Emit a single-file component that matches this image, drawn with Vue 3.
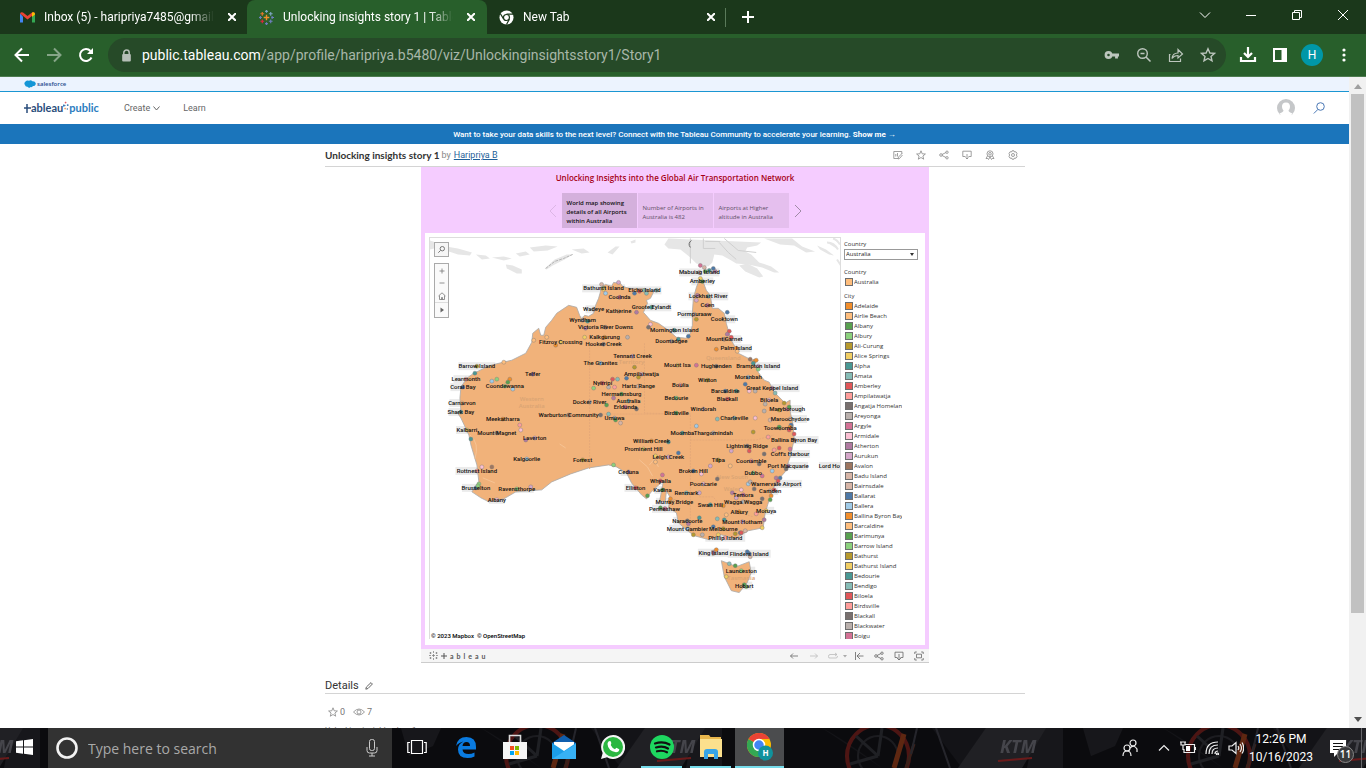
<script setup>
import { ref } from 'vue'

const search = ref('')
const country = ref('Australia')

const palette = ['#f28e2b', '#ffbe7d', '#59a14f', '#8cd17d', '#b6992d', '#f1ce63', '#499894', '#86bcb6', '#e15759', '#ff9d9a', '#79706e', '#bab0ac', '#d37295', '#fabfd2', '#b07aa1', '#d4a6c8', '#9d7660', '#d7b5a6', '#d7b5a6', '#4e79a7', '#a0cbe8']

const cities = ['Adelaide', 'Airlie Beach', 'Albany', 'Albury', 'Ali-Curung', 'Alice Springs', 'Alpha', 'Amata', 'Amberley', 'Ampilatwatja', 'Angatja Homeland', 'Areyonga', 'Argyle', 'Armidale', 'Atherton', 'Aurukun', 'Avalon', 'Badu Island', 'Bairnsdale', 'Ballarat', 'Ballera', 'Ballina Byron Bay', 'Barcaldine', 'Barimunya', 'Barrow Island', 'Bathurst', 'Bathurst Island', 'Bedourie', 'Bendigo', 'Biloela', 'Birdsville', 'Blackall', 'Blackwater', 'Boigu']
const cityColor = (i) => palette[i % 21]

const points = [
  'World map showing details of all Airports within Australia',
  'Number of Airports in Australia is 482',
  'Airports at Higher altitude in Australia'
]

const labels = [
  ['Bathurst Island', 604, 288], ['Elcho Island', 645, 290], ['Cooinda', 620, 297], ['Wadeye', 594, 309], ['Katherine', 619, 311],
  ['Groote Eylandt', 652, 307], ['Wyndham', 583, 320], ['Victoria River Downs', 606, 327], ['Kalkgurung', 605, 337], ['Fitzroy Crossing', 561, 342],
  ['Hooker Creek', 604, 344], ['Tennant Creek', 633, 356], ['The Granites', 601, 363], ['Barrow Island', 477, 366], ['Learmonth', 466, 379],
  ['Telfer', 533, 374], ['Coral Bay', 463, 387], ['Coondewanna', 505, 386], ['Nyirripi', 603, 383], ['Ampilatwatja', 642, 374],
  ['Harts Range', 639, 386], ['Hermannsburg', 622, 394], ['Australia', 629, 401], ['Erldunda', 626, 407], ['Docker River', 590, 402],
  ['Carnarvon', 462, 403], ['Shark Bay', 461, 412], ['Umuwa', 615, 418], ['Warburton Community', 569, 415], ['Meekatharra', 503, 419],
  ['Kalbarri', 467, 430], ['Mount Magnet', 497, 433], ['Laverton', 535, 438], ['Kalgoorlie', 527, 459], ['Forrest', 583, 460],
  ['Rottnest Island', 477, 471], ['Ceduna', 629, 472], ['Brusselton', 476, 488], ['Ravensthorpe', 517, 489], ['Elliston', 636, 488],
  ['Albany', 497, 500], ['Mabuiag Island', 700, 272], ['Amberley', 703, 281], ['Lockhart River', 709, 296], ['Coen', 708, 305],
  ['Pormpuraaw', 695, 314], ['Cooktown', 725, 319], ['Mornington Island', 675, 330], ['Doomadgee', 672, 341], ['Mount Garnet', 725, 339],
  ['Palm Island', 737, 348], ['Mount Isa', 678, 365], ['Hughenden', 717, 366], ['Brampton Island', 759, 366], ['Moranbah', 749, 377],
  ['Winton', 708, 380], ['Boulia', 681, 385], ['Great Keppel Island', 773, 388], ['Barcaldine', 726, 391], ['Bedourie', 677, 398],
  ['Blackall', 728, 399], ['Biloela', 770, 400], ['Windorah', 704, 409], ['Birdsville', 677, 413], ['Charleville', 735, 418],
  ['Maryborough', 788, 409], ['Maroochydore', 791, 419], ['Toowoomba', 781, 428], ['Moomba', 683, 433], ['Thargomindah', 714, 433],
  ['Ballina Byron Bay', 795, 440], ['William Creek', 652, 441], ['Prominent Hill', 644, 449], ['Lightning Ridge', 748, 446], ['Leigh Creek', 669, 457],
  ["Coff's Harbour", 791, 454], ['Tilpa', 719, 460], ['Coonamble', 752, 461], ['Port Macquarie', 789, 466], ['Broken Hill', 694, 471],
  ['Dubbo', 754, 473], ['Whyalla', 661, 481], ['Pooncarie', 704, 484], ['Warnervale Airport', 777, 484], ['Kadina', 663, 490],
  ['Renmark', 687, 493], ['Temora', 744, 495], ['Camden', 771, 491], ['Murray Bridge', 675, 502], ['Swan Hill', 711, 505],
  ['Wagga Wagga', 744, 502], ['Penneshaw', 665, 509], ['Albury', 740, 512], ['Moruya', 767, 511], ['Naracoorte', 688, 521],
  ['Mount Hotham', 743, 522], ['Mount Gambier', 688, 529], ['Melbourne', 724, 529], ['Phillip Island', 726, 538], ['King Island', 714, 553],
  ['Flinders Island', 750, 554], ['Launceston', 742, 571], ['Hobart', 745, 586], ['Lord Howe Island', 843, 466]
]
const plateWidth = (name) => name.length * 3 - 2

const dots = [
  [619, 282, 15], [606, 293, 20], [602, 284, 17], [637, 312, 14], [586, 328, 14], [588, 321, 6], [585, 337, 5], [628, 337, 11], [534, 340, 1], [547, 337, 1], [556, 345, 0],
  [504, 362, 1], [475, 373, 6], [497, 379, 3], [492, 381, 20], [510, 379, 0], [508, 382, 2], [513, 389, 20], [594, 388, 3], [613, 379, 8], [618, 379, 7], [609, 387, 11], [615, 387, 9],
  [614, 398, 14], [607, 405, 2], [637, 409, 10], [601, 415, 10], [609, 414, 7], [616, 420, 2], [621, 423, 17], [635, 367, 4], [627, 378, 19], [639, 377, 4], [520, 425, 9], [521, 430, 13],
  [526, 440, 14], [471, 439, 6], [482, 467, 13], [492, 467, 16], [479, 484, 3], [478, 486, 3], [614, 465, 3], [531, 487, 15], [648, 496, 2],
  [701, 265, 12], [705, 267, 17], [714, 268, 19], [710, 270, 6], [716, 271, 14], [706, 271, 2], [701, 278, 5], [698, 295, 14], [697, 300, 15], [697, 319, 4], [728, 312, 19],
  [651, 324, 13], [649, 327, 10], [647, 293, 7], [657, 290, 7], [640, 291, 8], [689, 336, 19], [679, 339, 6], [730, 331, 8], [728, 334, 14], [732, 337, 8], [717, 349, 0], [738, 351, 1],
  [697, 365, 12], [751, 359, 16], [755, 361, 0], [757, 360, 0], [754, 363, 6], [759, 369, 3], [746, 384, 19], [737, 391, 6], [750, 391, 13], [756, 391, 11], [776, 393, 7], [766, 404, 11],
  [785, 403, 4], [790, 407, 2], [765, 411, 11], [780, 410, 4], [718, 419, 7], [756, 418, 13], [771, 420, 17], [697, 426, 20], [792, 425, 19], [791, 427, 0], [790, 430, 8], [795, 434, 8],
  [754, 432, 4], [769, 437, 9], [780, 427, 2], [669, 442, 6], [679, 453, 19], [656, 456, 5], [656, 462, 1], [732, 451, 15], [750, 451, 8], [765, 454, 10], [775, 450, 9], [780, 448, 8], [791, 449, 12],
  [760, 464, 10], [711, 466, 15], [731, 466, 1], [702, 474, 13], [718, 479, 10], [763, 476, 12], [773, 471, 20], [787, 469, 10], [777, 478, 14], [781, 478, 19], [779, 481, 8], [749, 484, 20], [751, 482, 11],
  [755, 489, 10], [742, 490, 13], [733, 493, 14], [737, 498, 15], [700, 493, 15], [663, 475, 12], [671, 499, 0], [670, 502, 0], [775, 490, 8], [772, 496, 0], [771, 500, 2], [763, 499, 10], [724, 506, 0], [757, 514, 9],
  [765, 520, 14], [763, 528, 5], [727, 515, 1], [718, 519, 7], [725, 520, 6], [700, 518, 6], [689, 524, 14], [714, 527, 19], [694, 535, 4], [703, 535, 11], [736, 534, 4], [741, 533, 19], [742, 533, 8], [746, 531, 17],
  [719, 535, 5], [661, 508, 2], [666, 509, 12], [730, 564, 7], [736, 566, 2], [727, 577, 5], [717, 550, 0], [748, 552, 19], [751, 557, 17], [745, 585, 2], [747, 587, 3], [604, 289, 5], [635, 293, 19]
]
</script>

<template>
  <div class="desktop">
    <header class="tabs">
      <div class="tab">
        <svg class="fav" viewBox="0 0 15 12"><path fill="#4285f4" d="M0 2v9h3V5z" /><path fill="#34a853" d="M12 5v6h3V2z" /><path fill="#ea4335" d="M0 2Q1 0 3 1l4.500 3.500L12 1q2-1 3 1L7.500 8z" /><path fill="#fbbc04" d="M12 1q2-1 3 1v1l-3 2.500z" /></svg>
        <span class="tab-title">Inbox (5) - haripriya7485@gmail.com</span>
        <button class="close" aria-label="Close tab"><svg viewBox="0 0 8 8"><path d="M0 0l8 8M8 0L0 8" /></svg></button>
      </div>
      <div class="tab active">
        <svg class="fav" viewBox="0 0 16 16" fill="none"><path stroke="#f28e2b" stroke-width="1.500" d="M8 5v6M5 8h6" /><path stroke="#e8762c" stroke-width="1.300" d="M3.500 2v4M1.500 4h4" /><path stroke="#7fa8c4" stroke-width="1.200" d="M12.500 2v4M10.500 4h4M8 0v3M6.500 1.500h3" /><path stroke="#e0253c" stroke-width="1.300" d="M3.500 10v4M1.500 12h4" /><path stroke="#6f7fc0" stroke-width="1.200" d="M12.500 10v4M10.500 12h4M8 13v3M6.500 14.500h3M14 6.500v3M13 8h3M1.500 6.500v3M0 8h3" /></svg>
        <span class="tab-title">Unlocking insights story 1 | Tableau Public</span>
        <button class="close" aria-label="Close tab"><svg viewBox="0 0 8 8"><path d="M0 0l8 8M8 0L0 8" /></svg></button>
      </div>
      <div class="tab last">
        <svg class="fav" viewBox="0 0 16 16"><circle cx="8" cy="8" r="7.500" fill="#fff" /><circle cx="8" cy="8" r="3.200" fill="#fff" stroke="#1b381b" stroke-width="1.300" /><path d="M8 4.500h7M5 9.800L1.500 4M11 9.800L8 15.500" stroke="#1b381b" stroke-width="1.300" /></svg>
        <span class="tab-title">New Tab</span>
        <button class="close" aria-label="Close tab"><svg viewBox="0 0 8 8"><path d="M0 0l8 8M8 0L0 8" /></svg></button>
      </div>
      <button class="newtab" aria-label="New tab"><svg viewBox="0 0 12 12"><path d="M6 0v12M0 6h12" stroke="#fff" stroke-width="2" /></svg></button>
      <div class="win">
        <button aria-label="Search tabs"><svg width="12" height="12" viewBox="0 0 12 12"><path d="M1 3.500l5 5 5-5" /></svg></button>
        <button aria-label="Minimize"><svg width="12" height="12" viewBox="0 0 12 12"><path d="M1 6.500h10" /></svg></button>
        <button aria-label="Restore"><svg width="12" height="12" viewBox="0 0 12 12"><path d="M1.500 3.500h7v7h-7zM3.500 3.500v-2h7v7h-2" /></svg></button>
        <button aria-label="Close"><svg width="12" height="12" viewBox="0 0 12 12"><path d="M1 1l10 10M11 1L1 11" /></svg></button>
      </div>
    </header>

    <div class="toolbar">
      <button class="tool" aria-label="Back"><svg width="16" height="16" viewBox="0 0 16 16"><path d="M15 8H2M8 1.500L1.500 8 8 14.500" stroke="#fff" stroke-width="2" /></svg></button>
      <button class="tool" aria-label="Forward"><svg width="16" height="16" viewBox="0 0 16 16"><path d="M1 8h13M8 1.500L14.500 8 8 14.500" stroke="#86a588" stroke-width="2" /></svg></button>
      <button class="tool" aria-label="Reload"><svg width="16" height="16" viewBox="0 0 16 16"><path d="M13.500 10.500A6 6 0 1 1 12.500 4" stroke="#fff" stroke-width="2" /><path d="M15 1v6H9z" fill="#fff" /></svg></button>
      <div class="omnibox">
        <svg class="lock" viewBox="0 0 10 12"><path d="M2.500 5V3.500a2.500 2.500 0 0 1 5 0V5" stroke="#b6bfb7" stroke-width="1.400" /><rect x="1" y="4.500" width="8" height="7" rx="1" fill="#b6bfb7" /></svg>
        <span class="url"><b>public.tableau.com</b>/app/profile/haripriya.b5480/viz/Unlockinginsightsstory1/Story1</span>
        <button class="tool" aria-label="Passwords"><svg width="16" height="16" viewBox="0 0 16 16"><circle cx="4.500" cy="8" r="2.600" stroke="#bcc6bd" stroke-width="2.600" /><path d="M7 8h8M12.500 8v3.500" stroke="#bcc6bd" stroke-width="2.800" /></svg></button>
        <button class="tool" aria-label="Zoom"><svg width="16" height="16" viewBox="0 0 16 16"><circle cx="6.500" cy="6.500" r="4.800" stroke="#bcc6bd" stroke-width="1.400" /><path d="M10 10l4.500 4.500M4.500 6.500h4" stroke="#bcc6bd" stroke-width="1.500" /></svg></button>
        <button class="tool" aria-label="Share"><svg width="16" height="16" viewBox="0 0 16 16"><path d="M2.500 7.500h-1v7h11v-3M4 11.500q.5-5.500 6-5.500V2.500L14.500 7 10 11V8.500q-4 0-6 3z" stroke="#bcc6bd" stroke-width="1.200" /></svg></button>
        <button class="tool" aria-label="Bookmark"><svg width="16" height="16" viewBox="0 0 16 16"><path d="M8 1.800l1.900 4.200 4.500.4-3.400 3 1 4.500L8 11.500l-4 2.400 1-4.500-3.400-3 4.500-.4z" stroke="#bcc6bd" stroke-width="1.400" /></svg></button>
      </div>
      <button class="tool first" aria-label="Downloads"><svg width="18" height="18" viewBox="0 0 18 18"><path d="M9 1v9M5 7l4 4 4-4M2 11v4h14v-4" stroke="#fff" stroke-width="2.200" /></svg></button>
      <button class="tool" aria-label="Side panel"><svg width="14" height="14" viewBox="0 0 14 14"><path d="M1 1h12v12H1z" stroke="#fff" stroke-width="2" /><path d="M8.500 0H14v14H8.500z" fill="#fff" /></svg></button>
      <button class="tool" aria-label="Profile"><span class="me">H</span></button>
      <button class="tool" aria-label="Menu"><svg width="4" height="16" viewBox="0 0 4 16"><g fill="#fff"><circle cx="2" cy="3" r="1.600" /><circle cx="2" cy="8" r="1.600" /><circle cx="2" cy="13" r="1.600" /></g></svg></button>
    </div>

    <div class="view">
      <main class="page">
        <div class="sf">
          <svg width="12" height="8" viewBox="0 0 12 8"><path fill="#1596d6" d="M1 5Q-.5 3 1.500 1.500 3-.2 5 .8 7-.5 8.300 1.200 11 .8 11.800 3.200 11.800 6 9 6 8.200 7.500 6.500 7 5 8.800 3.500 6.800 1.200 7 1 5z" /></svg>
          <span>salesforce</span>
        </div>
        <nav class="nav">
          <a class="brand" href="#" aria-label="tableau public"><svg width="7" height="9" viewBox="0 0 7 9"><path d="M3 0v9M0 4h7" stroke="#2a4d7c" stroke-width="1.500" /></svg><span>ableau</span><svg class="spark" width="6" height="10" viewBox="0 0 7 10"><path stroke="#e8585e" d="M3 0v2M2 1h2" /><path stroke="#2a6dac" d="M1 3v3M0 4.500h3M5.500 3v2M4.500 4h2M5 7.500v2" /><path stroke="#f29b5b" d="M2.500 7v2M1.500 8h2" /></svg><span class="pub">public</span></a>
          <button class="link">Create <svg width="7" height="5" viewBox="0 0 7 5"><path d="M.5.5l3 3.500 3-3.500" stroke="#666" /></svg></button>
          <a class="link learn" href="#">Learn</a>
          <svg class="user" width="18" height="18" viewBox="0 0 18 18"><circle cx="9" cy="9" r="9" fill="#c5c7c9" /><path fill="#fff" d="M9 3.500c3 0 4.200 2 4 4.500q-.3 2.600-1.500 3.500 0 1.500 4 3L13 18H5l-2.500-3.500q4-1.500 4-3Q5.300 10.600 5 8c-.2-2.500 1-4.500 4-4.500z" /></svg>
          <button class="find" aria-label="Search"><svg width="12" height="12" viewBox="0 0 12 12"><circle cx="7.500" cy="4.500" r="3.800" stroke="#4a78b5" /><path d="M4.800 7.500L.8 11.500" stroke="#4a78b5" /></svg></button>
        </nav>
        <div class="banner">Want to take your data skills to the next level? Connect with the Tableau Community to accelerate your learning.&nbsp;<a href="#">Show me →</a></div>

        <div class="wrap">
          <div class="head">
            <h1>Unlocking insights story 1</h1><span class="by">by</span><a href="#">Haripriya B</a>
            <div class="acts">
              <button aria-label="Edit"><svg viewBox="0 0 10 10"><path d="M5 8.500H.8v-7h8V4M2.800 6.500V4M4.500 6.500V3M5 9l.5-2L9 3.500M9.500 5L6.500 8.500 5 9" /></svg></button>
              <button aria-label="Favorite"><svg viewBox="0 0 10 10"><path d="M5 .8l1.200 3 3.200.2-2.500 2 .8 3.200L5 7.500 2.300 9.200l.8-3.200L.6 4l3.200-.2z" /></svg></button>
              <button aria-label="Share"><svg viewBox="0 0 10 10"><circle cx="2" cy="5" r="1.300" /><circle cx="8" cy="2.200" r="1.200" /><circle cx="8" cy="7.800" r="1.200" /><path d="M3 4.500l4-2M3 5.500l4 2" /></svg></button>
              <button aria-label="Download"><svg viewBox="0 0 10 10"><path d="M3.500 6.500H.8V1.200h8.400v5.300H6.500M5 4v5M3.500 7.500L5 9l1.500-1.500" /></svg></button>
              <button aria-label="Nominate"><svg viewBox="0 0 10 10"><circle cx="5" cy="3.800" r="3" /><circle cx="5" cy="3.800" r="1.300" /><path d="M2.500 6L1 8.500l1.800 0 .7 1L5 7l1.500 2.500.7-1 1.800 0L7.500 6" /></svg></button>
              <button aria-label="Settings"><svg viewBox="0 0 10 10"><circle cx="5" cy="5" r="1.500" /><path d="M4 .8h2l.5 1.200 1.500-.2 1 1.700-.6 1.500.6 1.500-1 1.700-1.500-.2L6 9.200H4L3.500 8 2 8.200 1 6.500 1.600 5 1 3.500l1-1.700 1.500.2z" /></svg></button>
            </div>
          </div>

          <section class="viz">
            <div class="story">
              <h2>Unlocking Insights into the Global Air Transportation Network</h2>
              <div class="steps">
                <button class="arrow dim" aria-label="Previous"><svg viewBox="0 0 8 14"><path d="M7 1L1 7l6 6" /></svg></button>
                <button v-for="(p, i) in points" :key="p" class="step" :class="{ on: i === 0 }">{{ p }}</button>
                <button class="arrow" aria-label="Next"><svg viewBox="0 0 8 14"><path d="M1 1l6 6-6 6" /></svg></button>
              </div>
              <div class="dash">
                <div class="map">
                  <svg class="canvas" viewBox="430 238 411 401">
                    <g fill="#e6e6e6">
                      <path d="M669 238l-4 6 4 4 12 1 10 8 6 6 12 3 4-4 2-8 8 1 9 5 5 3 12 1 14 3 12 5 5 0-8-6-12-4-8-8-6-3 2-4 10-2 4-3z" />
                      <path d="M430 240l6 2-2 6-4 1zM446 246l12 2 14 4-2 3-12-1-12-4zM476 254l10 1 4 3-8 1zM492 257l12-1 8 2-8 2zM516 253l10-2 4 3-10 2zM506 264l7 1 9 4 0 4-5 0-10-5zM545 268l10-9 12-5 6 0-8 5-12 6-6 4zM530 247l16-2 12 1-10 4-14 1zM572 249l12-1 6 4-8 1zM608 252l8-6 4 0-7 8zM631 241l5-2 0 3-4 1zM740 265l8-2 10 5 6 8-4 1-14-6zM765 238l28 0 10 8 13 5-9 1-12-7-14-1zM818 245l9 4 8 6-5-1-9-5z" />
                      <path d="M828 242q7 0 11 7M834 238q4 1 7 6M838 259l4 6" stroke="#e6e6e6" stroke-width="2" />
                    </g>
                    <path d="M691 238v25M704 238v10h12M706 241h15M720 242l9 10 8 7M725 238l14 12 18 2" stroke="#cfcfcf" />
                    <path d="M692 240q-4 3-1 7" stroke="#666" />
                    <path d="M546 268l9-7 9-3 9-4" stroke="#b5b5b5" stroke-dasharray="3 1" />
                    <g fill="#ebebeb">
                      <rect v-for="l in labels" :key="l[0]" :x="l[1] - plateWidth(l[0]) / 2" :y="l[2] - 4" :width="plateWidth(l[0])" height="8" />
                    </g>
                    <path class="land" d="M580 315l2 4 3-4 4 1 5-3 2-8 3-7 2-7 0-4 5-3 6 2 2-4 7 1 2 3 7 2 5 0 8 0 6 1 5 3-3 6-4 2 1 3-4 9 7 8 8 3 10 7 8 7 10 1 4-5 2-8 0-13 1-14 3-11 4-10 3 5 3 8 4 5 2 13 6 0 6 5 2 10 2 7 3 10 4 7 3 6 10 5 6 5 4 9 6 8 5 2 5 10 11 11 5-3 0 11 3 14 1 15-4 17-5 15-9 10-6 15-5 16-2 15-15 3-13 8-14-4-12 5-15-4-8-6-8-7-2-10-8-5 2-10-4-7-1 10-6 1 2-10 2-11-7 6-6 6-4 6-5-4-10-12-5-10-10-6-8-2-20 3-18 6-19 8-10 8-26 2-12 7-15 3-8-4-9-6 7-10-2-17-6-20-2-10-8-17-4-6 4 0-1-14 1-11 6-9 7-5 17-8 21-5 14-7 6-11 1-9 6-5 2 7 3 0 2-8 6-7 5-7 12-8 8 2z" />
                    <path class="land" d="M722 561l8 3 7 3 13-5 2 11-4 10-8 10-8-2-7-14z" />
                    <path class="land" d="M712 551l4-1 0 5-3 1zM748 551l4 2 0 5-2-2z" />
                    <path d="M590 344v125M645 343v70l46 1v114M590 414h101M691 440h66l18-5M700 497l14 0 6 8 12-1 8 9 14 4" stroke="#e5a978" stroke-dasharray="2 1" />
                    <path d="M470 435q10 8 5 24M483 478l12 5M640 460l8 7 5 9M560 444l6 4M650 465l5-6 4 8" stroke="#f6c394" />
                    <g class="state"><text x="532" y="401">Western</text><text x="532" y="408">Australia</text><text x="724" y="360">Queensland</text><text x="632" y="364">Territory</text><text x="733" y="479">New South</text><text x="733" y="491">Wales</text><text x="742" y="580">Tasmania</text></g>
                    <g class="dots">
                      <circle v-for="(l, i) in labels" :key="l[0]" :cx="l[1]" :cy="l[2]" r="2" :fill="palette[(i * 5 + 2) % 21]" />
                      <circle v-for="(d, i) in dots" :key="i" :cx="d[0]" :cy="d[1]" r="2" :fill="palette[d[2]]" />
                    </g>
                    <g class="names"><text v-for="l in labels" :key="l[0]" :x="l[1]" :y="l[2] + 2">{{ l[0] }}</text></g>
                  </svg>
                  <button class="mapfind" aria-label="Search map"><svg width="7" height="7" viewBox="0 0 7 7"><circle cx="4.300" cy="2.700" r="2.200" stroke="#777" /><path d="M2.600 4.400L.3 6.700" stroke="#777" /></svg></button>
                  <div class="zoomer">
                    <button aria-label="Zoom in"><svg viewBox="0 0 8 8"><path d="M4 1.500v5M1.500 4h5" /></svg></button>
                    <button aria-label="Zoom out"><svg viewBox="0 0 8 8"><path d="M1.500 4h5" /></svg></button>
                    <button aria-label="Reset"><svg viewBox="0 0 8 8"><path d="M.5 4L4 .8 7.500 4M1.500 3.500v4h5v-4M3.500 7.500v-2h1v2" /></svg></button>
                    <button aria-label="Map tools"><svg viewBox="0 0 8 8"><path d="M2.500 1.500v5L6 4z" fill="#666" stroke="none" /></svg></button>
                  </div>
                  <span class="credit">© 2023 Mapbox &nbsp;© OpenStreetMap</span>
                </div>
                <aside class="side">
                  <label for="country">Country</label>
                  <div class="pick">
                    <select id="country" v-model="country"><option>Australia</option></select>
                    <svg viewBox="0 0 4 3"><path d="M0 0h4L2 3z" fill="#333" /></svg>
                  </div>
                  <h3 class="gap-l">Country</h3>
                  <ul><li><i class="tan"></i><span>Australia</span></li></ul>
                  <h3 class="gap-s">City</h3>
                  <ul class="cities"><li v-for="(c, i) in cities" :key="c"><i :style="{ background: cityColor(i) }"></i><span>{{ c }}</span></li></ul>
                </aside>
              </div>
            </div>
            <footer class="vizbar">
              <svg class="mark" viewBox="0 0 9 9"><path d="M4.500 3v3M3 4.500h3M4.500 0v2M4.500 7v2M0 4.500h2M7 4.500h2M1.500 1v2M.5 2h2M7.500 1v2M6.500 2h2M1.500 6v2M.5 7h2M7.500 6v2M6.500 7h2" /></svg>
              <span class="word"><svg viewBox="0 0 6 6"><path d="M3 0v6M0 3h6" /></svg><span v-for="(ch, i) in 'ableau'" :key="i">{{ ch }}</span></span>
              <button class="bt" aria-label="Undo"><svg viewBox="0 0 10 10"><path d="M9 5H1.500M4 2.500L1.500 5 4 7.500" /></svg></button>
              <button class="bt faint" aria-label="Redo"><svg viewBox="0 0 10 10"><path d="M1 5h7.500M6 2.500L8.500 5 6 7.500" /></svg></button>
              <button class="bt faint mid" aria-label="Replay"><svg viewBox="0 0 10 10"><path d="M7 2l2 1.500L7 5M9 3.500H2q-1.500 0-1.500 2T2 7h6q1.500 0 1.500-2" /></svg></button>
              <button class="bt mini" aria-label="Replay speed"><svg viewBox="0 0 10 10"><path d="M3 4h4L5 6.500z" fill="#aaa" stroke="none" /></svg></button>
              <button class="bt" aria-label="Revert"><svg viewBox="0 0 10 10"><path d="M1.500 1v8M9.500 5H3M6 2L3 5l3 3" /></svg></button>
              <button class="bt" aria-label="Share"><svg viewBox="0 0 10 10"><circle cx="2" cy="5" r="1.300" /><circle cx="8" cy="2.200" r="1.200" /><circle cx="8" cy="7.800" r="1.200" /><path d="M3 4.500l4-2M3 5.500l4 2" /></svg></button>
              <button class="bt" aria-label="Download"><svg viewBox="0 0 10 10"><path d="M3.500 6.500H1V1.200h8v5.300H6.500M5 3v6M3 7l2 2 2-2" /></svg></button>
              <button class="bt" aria-label="Full screen"><svg viewBox="0 0 10 10"><path d="M.8 3V1h2M7.200 1h2v2M9.200 7v2h-2M2.800 9h-2V7M2.500 3.200h5v3.600h-5z" /></svg></button>
            </footer>
          </section>

          <div class="details"><h2>Details</h2><svg width="8" height="8" viewBox="0 0 8 8"><path d="M.8 7.200l.6-2.200L6 .6l1.400 1.400L3 6.500z" stroke="#666" /></svg></div>
          <div class="stats">
            <svg class="s-star" viewBox="0 0 10 10"><path d="M5 .8l1.200 3 3.200.2-2.500 2 .8 3.200L5 7.500 2.300 9.200l.8-3.200L.6 4l3.200-.2z" /></svg><span>0</span>
            <svg class="s-eye" viewBox="0 0 12 8"><path d="M.5 4Q6-2 11.500 4 6 10 .5 4z" /><circle cx="6" cy="4" r="2" /></svg><span>7</span>
          </div>
          <p class="desc">Unlocking insights story 1</p>
        </div>
      </main>
      <div class="scroll">
        <svg viewBox="0 0 8 5"><path d="M4 0l4 5H0z" fill="#a0a0a0" /></svg>
        <div class="track"><div class="thumb"></div></div>
        <svg viewBox="0 0 8 5"><path d="M0 0h8L4 5z" fill="#505050" /></svg>
      </div>
    </div>

    <footer class="task">
      <svg class="wall" aria-hidden="true">
        <defs>
          <pattern id="bike" x="40" width="341" height="40" patternUnits="userSpaceOnUse">
            <rect width="341" height="40" fill="#0b0b0e" />
            <path d="M313 0h28v40h-36zM20 0h40l-8 18-24 10z" fill="#17171b" />
            <path d="M160 40Q120 10 100 0M210 0l60 0 20 12v28h-50z" fill="#131317" />
            <g fill="none"><circle cx="156" cy="28" r="31" stroke="#4d1513" stroke-width="4" /><circle cx="156" cy="28" r="20" stroke="#1c1c20" stroke-width="2" /><path d="M156 28l-22-20M156 28l-28 8M156 28l4-28" stroke="#1f2024" stroke-width="3" /><path d="M172 40l10-34" stroke="#5e2711" stroke-width="5" /><path d="M184 40l8-24" stroke="#3a2019" stroke-width="3" /><path d="M214 0l14 40M195 0l-6 26" stroke="#25252b" stroke-width="2" /></g>
            <path d="M236 40l28-40h60l-24 40z" fill="#202024" />
            <text x="278" y="25" fill="#45454b" font-size="18" font-weight="700" font-style="italic">KTM</text>
            <path d="M276 33l34-3" stroke="#6a1a1a" stroke-width="2" />
          </pattern>
        </defs>
        <rect width="100%" height="100%" fill="url(#bike)" />
      </svg>
      <button class="app start" aria-label="Start"><svg width="17" height="16" viewBox="0 0 17 16"><path fill="#fff" stroke="none" d="M0 2.300L7 1.300v6.200H0zM8 1.200L17 0v7.500H8zM0 8.500h7v6.200l-7-1zM8 8.500h9V16l-9-1.200z" /></svg></button>
      <div class="search">
        <svg width="22" height="22" viewBox="0 0 22 22"><circle cx="11" cy="11" r="9.500" stroke="#f2f2f2" stroke-width="2.600" /></svg>
        <input v-model="search" aria-label="Type here to search" placeholder="Type here to search" />
        <svg width="12" height="18" viewBox="0 0 12 18"><rect x="3.500" y=".5" width="5" height="11" rx="2" stroke="#ccc" /><path d="M1 8v3.500q0 2.500 2.500 2.500h5q2.500 0 2.500-2.500V8M6 14v3M3 17h6" stroke="#ccc" /></svg>
      </div>
      <button class="app" aria-label="Task view"><svg width="20" height="16" viewBox="0 0 20 16"><path d="M4.500 1.500h11v13h-11zM3 3.500H.8v10H3M17 3.500h2.200v10H17" stroke="#fff" stroke-width="1.200" /></svg></button>
      <button class="app" aria-label="Edge"><svg width="22" height="22" viewBox="0 0 22 22"><path fill="#0a7be0" d="M1 10Q2.500 1 11.500 1 21 1 21 11v2.500H7.500q.5 4.500 6 4.500 3 0 6-1.500v4q-3 1.500-7 1.500Q3 22 3 13.500 3 8 8.500 5.500 3.500 6.500 1 10zm6.500 0H15q0-4-3.500-4T7.500 10z" /></svg></button>
      <button class="app" aria-label="Store"><svg width="24" height="26" viewBox="0 0 24 26"><path d="M6.500 9V1.500h11V9" stroke="#ddd" stroke-width="1.600" /><path fill="#f5f5f5" d="M0 8h24v17H0z" /><path fill="#f25022" d="M7 12h4v4H7z" /><path fill="#7fba00" d="M12 12h4v4h-4z" /><path fill="#00a4ef" d="M7 17h4v4H7z" /><path fill="#ffb900" d="M12 17h4v4h-4z" /></svg></button>
      <button class="app" aria-label="Mail"><svg width="24" height="24" viewBox="0 0 24 24"><path fill="#0f5fae" d="M0 8l12-8 12 8v8H0z" /><path fill="#fff" d="M2 7h20v8l-10 4-10-4z" /><path fill="#1b9de8" d="M0 8l12 8 12-8v16H0z" /><path fill="#37b1f5" d="M0 24L24 9v15z" /></svg></button>
      <button class="app" aria-label="WhatsApp"><svg width="24" height="24" viewBox="0 0 24 24"><path fill="#f5f5f5" d="M12 0a12 12 0 1 1-6 22.300L0 24l1.700-6A12 12 0 0 1 12 0z" /><circle cx="12" cy="12" r="10" fill="#2bb741" /><path fill="#fff" d="M7.500 6.500q2-1.500 2.600.8.6 1.700-.4 2.700 1.300 3 4.300 4.200l1.300-1.400 3 1.500q-.2 3-3.300 3Q7 16 6.500 9q0-1.500 1-2.500z" /></svg></button>
      <button class="app run" aria-label="Spotify"><svg width="24" height="24" viewBox="0 0 24 24"><circle cx="12" cy="12" r="12" fill="#1ed760" /><path d="M5 8.500q8-2.500 14.500 1M6 12.500q7-2 12 1M7 16.300q5.500-1.500 10 1" stroke="#111" stroke-width="2.200" stroke-linecap="round" /></svg></button>
      <button class="app run" aria-label="File Explorer"><svg width="22" height="24" viewBox="0 0 22 24"><path fill="#e8b64c" d="M0 0h9l1.500 2H21v4H0z" /><path fill="#fbe08d" d="M0 4h22v18H0z" /><path fill="#37a5e8" d="M4 24v-7q0-3 3-3h8q3 0 3 3v7h-4v-5H8v5z" /></svg></button>
      <button class="app run hot" aria-label="Chrome"><svg width="26" height="28" viewBox="0 0 26 28"><circle cx="12" cy="12" r="12" fill="#fbbc04" /><path fill="#34a853" d="M12 12L1.600 6A12 12 0 0 0 12 24z" /><path fill="#ea4335" d="M12 12V6h10.400A12 12 0 0 0 1.600 6z" /><circle cx="12" cy="12" r="5.500" fill="#4285f4" stroke="#fff" stroke-width="1.500" /><circle cx="18.500" cy="20" r="7.500" fill="#10929c" /><text x="18.500" y="23" text-anchor="middle" font-size="8" font-weight="700" fill="#fff">H</text></svg></button>
      <div class="tray">
        <button class="t-people" aria-label="People"><svg width="16" height="18" viewBox="0 0 16 18"><circle cx="11" cy="4" r="3" /><path d="M8 9q4-4 7 1v3" /><circle cx="5" cy="9" r="3" /><path d="M1 17q0-5 4-5t4 5" /></svg></button>
        <button aria-label="Show hidden icons"><svg width="12" height="8" viewBox="0 0 12 8"><path d="M1 6.500L6 1.500l5 5" /></svg></button>
        <button aria-label="Battery"><svg width="16" height="14" viewBox="0 0 16 14"><path d="M5 3.500h9.500v8H4V8M15.500 6v3M1 1v3h4V1M3 4v5M0 1h6" /><path fill="#fff" stroke="none" d="M6 5h4v5H6z" /></svg></button>
        <button aria-label="Network"><svg width="14" height="14" viewBox="0 0 14 14"><path d="M1 13Q1 1 13 1M4 13q0-9 9-9M7 13q0-6 6-6M10 13q0-3 3-3" stroke-width="1.200" /><circle cx="12.500" cy="13" r="1" /></svg></button>
        <button aria-label="Volume"><svg width="16" height="14" viewBox="0 0 16 14"><path d="M1 5h3l4-3.500v11L4 9H1zM10 5q1.500 2 0 4M12 3q3 4 0 8M14 1.500q3.500 5.500 0 11" /></svg></button>
        <div class="clock"><span>12:26 PM</span><span>10/16/2023</span></div>
        <button class="note" aria-label="Notifications"><svg width="18" height="18" viewBox="0 0 18 18"><path fill="#fff" stroke="none" d="M1 1h16v13h-8l-4 4v-4H1z" /><path stroke="#111" d="M4 4.500h10M4 7.500h10M4 10.500h6" /></svg><span class="count">11</span></button>
        <div class="edge"></div>
      </div>
    </footer>
  </div>
</template>

<style>
html, body { margin: 0; overflow: hidden; }
</style>
<style scoped>
* { box-sizing: border-box; }
button { background: none; border: 0; padding: 0; margin: 0; font: inherit; color: inherit; display: flex; align-items: center; justify-content: center; }
h1, h2, h3, p, ul { margin: 0; padding: 0; list-style: none; }
svg { display: block; fill: none; flex: none; }
.desktop { height: 100vh; display: flex; flex-direction: column; font-family: "Open Sans", "Noto Sans", sans-serif; background: #fff; overflow: hidden; }

.tabs { height: 34px; flex: none; background: #1b381b; display: flex; align-items: stretch; color: #fff; }
.tab { width: 240px; flex: 0 1 240px; display: flex; align-items: center; gap: 9px; padding: 0 12px; font: 12px Roboto, sans-serif; }
.tab:first-child { width: 247px; flex-basis: 247px; padding: 0 11px 0 20px; }
.tab.active { background: #285f2b; border-radius: 8px 8px 0 0; }
.fav { width: 15px; height: 15px; }
.tab-title { flex: 1; min-width: 0; overflow: hidden; white-space: nowrap; -webkit-mask-image: linear-gradient(90deg, #000 86%, transparent); mask-image: linear-gradient(90deg, #000 86%, transparent); }
.close { width: 8px; height: 8px; margin-left: 5px; }
.close svg { width: 8px; height: 8px; stroke: #fff; stroke-width: 2; }
.newtab { width: 42px; }
.newtab svg { width: 12px; height: 12px; }
.tab.last { position: relative; }
.tab.last::after { content: ""; position: absolute; right: 1px; top: 8px; height: 19px; width: 1px; background: #5a7a5a; }
.win { margin-left: auto; display: flex; padding-bottom: 5px; }
.win button { width: 46px; }
.win svg { stroke: #fff; }

.toolbar { height: 43px; flex: none; background: #285f2b; border-bottom: 1px solid #4d7c50; display: flex; align-items: center; padding: 0 6px; }
.tool { width: 32px; height: 34px; flex: none; }
.tool.first { margin-left: 6px; }
.omnibox { flex: 1; min-width: 0; height: 34px; margin-left: 6px; border-radius: 17px; background: #264a28; display: flex; align-items: center; padding: 0 2px 0 13px; }
.lock { width: 11px; height: 13px; }
.url { flex: 1; min-width: 0; margin-left: 10px; font: 14px/20px Roboto, sans-serif; color: #a8b7a9; white-space: nowrap; overflow: hidden; }
.url b { font-weight: 400; color: #fff; }
.me { width: 22px; height: 22px; border-radius: 11px; background: #0097a7; color: #fff; font: 12px/22px Roboto, sans-serif; text-align: center; }

.view { flex: 1; min-height: 0; display: flex; }
.page { flex: 1; min-width: 0; overflow: hidden; background: #fff; font-family: Roboto, sans-serif; }
.scroll { width: 17px; background: #f1f1f1; display: flex; flex-direction: column; align-items: center; padding: 7px 0 6px; gap: 5px; }
.scroll svg { width: 8px; height: 5px; }
.track { flex: 1; width: 13px; }
.thumb { height: 84%; background: #c1c1c1; }

.sf { height: 15px; background: #ecf3fe; border-bottom: 1px solid #1b96d2; display: flex; align-items: center; gap: 1px; padding: 0 24px; }
.sf span { font: 600 6px/10px "Open Sans", sans-serif; color: #1e4b8f; }
.nav { height: 32px; display: flex; align-items: center; padding: 0 24px; font-size: 9px; color: #666; }
.brand { display: flex; align-items: center; text-decoration: none; color: #2a4d7c; font: 700 11px/16px Lato, sans-serif; width: 75px; }
.brand .pub { color: #2a7cc0; }
.spark { margin-bottom: 5px; }
.link { margin-left: 25px; color: #666; text-decoration: none; gap: 3px; }
.learn { margin-left: 23px; }
.user { margin-left: auto; }
.find { margin: 0 0 0 18px; width: 12px; }
.banner { height: 20px; background: #1b75bb; color: #fff; font: 500 8px Roboto, sans-serif; display: flex; align-items: center; justify-content: center; white-space: nowrap; }
.banner a { color: #fff; font-weight: 700; text-decoration: none; }

.wrap { max-width: 701px; margin: 0 auto; padding-left: 1px; }
.head { height: 23px; display: flex; align-items: center; border-bottom: 1px solid #d4d4d4; font-size: 9px; }
.head h1 { font: 700 10px Lato, sans-serif; color: #333; }
.by { margin: 0 3px 0 2px; color: #888; }
.head a { color: #1f5f99; }
.acts { margin-left: auto; display: flex; gap: 13px; padding-right: 7px; }
.acts button { width: 10px; }
.acts svg, .bt svg, .mark, .s-star, .s-eye { width: 10px; height: 10px; stroke: #888; stroke-width: .8; }

.viz { max-width: 508px; margin: 0 auto; border-bottom: 1px solid #ccc; }
.story { background: #f5ccff; padding: 4px; font-family: "Open Sans", sans-serif; }
.story h2 { text-align: center; color: #a50016; font-size: 8px; line-height: 13px; font-weight: 600; }
.steps { display: flex; justify-content: center; gap: 1px; padding: 9px 0 5px; }
.step { width: 75px; height: 35px; overflow: hidden; padding: 6px 5px 2px; background: #e5bfee; color: #5f5065; font-size: 6px; line-height: 9px; text-align: left; display: block; }
.step.on { background: #d4b0dc; color: #111; font-weight: 600; }
.arrow { width: 16px; }
.arrow svg { width: 8px; height: 14px; stroke: #a08ba6; }
.arrow.dim svg { stroke: #dcb6e5; }
.dash { background: #fff; display: flex; padding: 4px 4px 6px; height: 412px; }
.map { flex: 1; min-width: 0; position: relative; border: 1px solid #ddd; border-bottom: 0; overflow: hidden; }
.canvas { width: 100%; height: 100%; }
.land { fill: #f1b27a; stroke: #aaa; stroke-width: .8; }
.state { font: 600 6px "Open Sans", sans-serif; fill: #d9a474; text-anchor: middle; }
.names { font: 500 6px Roboto, sans-serif; fill: #111; text-anchor: middle; }
.dots { stroke: #777; stroke-width: .4; }
.mapfind { position: absolute; left: 4px; top: 4px; width: 15px; height: 15px; border: 1px solid #aaa; background: #f6f6f6; }
.zoomer { position: absolute; left: 4px; top: 25px; width: 15px; border: 1px solid #aaa; background: #fafafa; padding: 1px 0 0; }
.zoomer button { width: 13px; height: 12px; }
.zoomer button:nth-child(3) { height: 13px; }
.zoomer button:last-child { border-top: 1px solid #ddd; height: 15px; }
.zoomer svg { width: 8px; height: 8px; stroke: #777; stroke-width: .8; }
.credit { position: absolute; left: 1px; bottom: 0; font: 500 6px/7px Roboto, sans-serif; color: #000; }
.side { width: 80px; padding: 2px 3px 0; font-size: 6px; line-height: 10px; color: #333; height: 402px; overflow: hidden; }
.side label, .side h3 { display: block; height: 10px; font-size: 6px; font-weight: 400; line-height: 10px; }
.pick { position: relative; width: 74px; height: 11px; border: 1px solid #999; }
.pick select { appearance: none; display: block; width: 100%; height: 9px; border: 0; padding: 0 1px; background: #fff; color: #222; font: 6px/9px "Open Sans", sans-serif; }
.pick svg { position: absolute; right: 3px; top: 3px; width: 4px; height: 3px; pointer-events: none; }
.gap-l { margin-top: 7px; }
.gap-s { margin-top: 4px; }
.side li { display: flex; align-items: center; height: 10px; gap: 1px; margin-left: 1px; }
.side li i { width: 8px; height: 8px; border: 1px solid #6d6d6d; flex: none; }
.side li .tan { background: #ffbe7d; }
.side li span { width: 48px; overflow: hidden; white-space: nowrap; }

.vizbar { height: 13px; background: #f5f5f5; display: flex; align-items: center; padding: 0 0 0 8px; }
.mark { width: 9px; height: 9px; stroke: #777; stroke-width: .7; }
.word { display: flex; align-items: center; gap: 3px; margin: 0 auto 0 3px; font: 700 7px/10px Lato, sans-serif; color: #555; }
.word svg { width: 6px; height: 6px; stroke: #555; }
.bt { width: 20px; }
.bt.mid { width: 17px; }
.bt svg { stroke: #666; }
.bt.faint svg { stroke: #bbb; }
.bt.mini { width: 8px; }
.details { margin-top: 15px; height: 16px; display: flex; align-items: center; gap: 6px; border-bottom: 1px solid #d4d4d4; }
.details h2 { font-size: 11px; font-weight: 400; line-height: 15px; color: #333; }
.stats { display: flex; align-items: center; gap: 2px; margin: 12px 0 0 3px; height: 11px; font-size: 9px; color: #777; }
.s-eye { width: 12px; height: 8px; margin-left: 6px; }
.desc { margin-top: 7px; font-size: 8px; line-height: 11px; color: #777; white-space: nowrap; }

.task { height: 40px; flex: none; position: relative; display: flex; background: #0d0d10; color: #fff; overflow: hidden; }
.task > * { position: relative; }
.task .wall { position: absolute; left: 0; top: 0; width: 100%; height: 100%; }
.app { width: 49px; flex: none; border-bottom: 2px solid transparent; }
.start { width: 48px; }
.run::after { content: ""; position: absolute; left: 4px; right: 4px; bottom: -2px; height: 2px; background: #76dbea; }
.hot { background: #4b4c4e; }
.hot::after { left: 0; right: 0; }
.search { width: 344px; background: #323232; display: flex; align-items: center; padding: 0 14px 0 8px; }
.search input { flex: 1; min-width: 0; margin-left: 10px; padding: 0; background: none; border: 0; outline: 0; color: #ccc; font: 14px "Open Sans", sans-serif; }
.search input::placeholder { color: #a9a9a9; opacity: 1; }
.tray { margin-left: auto; display: flex; align-items: center; }
.tray button { width: 24px; height: 40px; }
.tray svg { stroke: #eee; stroke-width: 1.2; }
.tray .t-people { width: 44px; }
.clock { width: 66px; display: flex; flex-direction: column; align-items: center; font: 12px/18px Roboto, sans-serif; }
.tray .note { width: 46px; position: relative; margin-left: 1px; }
.count { position: absolute; right: 7px; bottom: 5px; width: 17px; height: 17px; border-radius: 9px; background: #3a3a3c; border: 1px solid #888; font-size: 10px; line-height: 15px; font-weight: 600; text-align: center; }
.edge { width: 5px; height: 40px; border-left: 1px solid #66666a; }
</style>
